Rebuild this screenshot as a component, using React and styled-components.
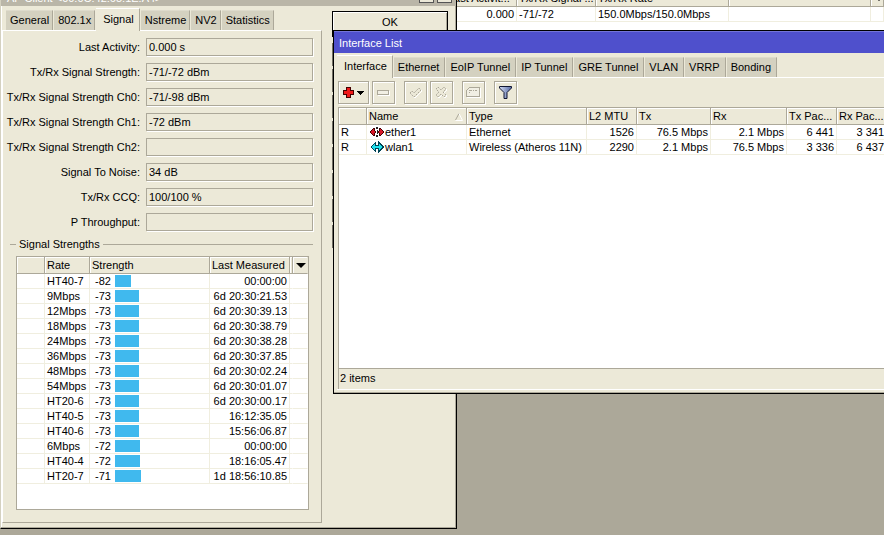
import React, { useState } from 'react';
import styled, { createGlobalStyle, css } from 'styled-components';

const clientTabs = ['General', '802.1x', 'Signal', 'Nstreme', 'NV2', 'Statistics'];

const interfaceTabs = [
  'Interface',
  'Ethernet',
  'EoIP Tunnel',
  'IP Tunnel',
  'GRE Tunnel',
  'VLAN',
  'VRRP',
  'Bonding',
];

const fields = [
  { id: 'activity', label: 'Last Activity:', value: '0.000 s' },
  { id: 'strength', label: 'Tx/Rx Signal Strength:', value: '-71/-72 dBm' },
  { id: 'ch0', label: 'Tx/Rx Signal Strength Ch0:', value: '-71/-98 dBm' },
  { id: 'ch1', label: 'Tx/Rx Signal Strength Ch1:', value: '-72 dBm' },
  { id: 'ch2', label: 'Tx/Rx Signal Strength Ch2:', value: '' },
  { id: 'noise', label: 'Signal To Noise:', value: '34 dB' },
  { id: 'ccq', label: 'Tx/Rx CCQ:', value: '100/100 %' },
  { id: 'throughput', label: 'P Throughput:', value: '' },
];

const rates = [
  { rate: 'HT40-7', dbm: -82, measured: '00:00:00' },
  { rate: '9Mbps', dbm: -73, measured: '6d 20:30:21.53' },
  { rate: '12Mbps', dbm: -73, measured: '6d 20:30:39.13' },
  { rate: '18Mbps', dbm: -73, measured: '6d 20:30:38.79' },
  { rate: '24Mbps', dbm: -73, measured: '6d 20:30:38.28' },
  { rate: '36Mbps', dbm: -73, measured: '6d 20:30:37.85' },
  { rate: '48Mbps', dbm: -73, measured: '6d 20:30:02.24' },
  { rate: '54Mbps', dbm: -73, measured: '6d 20:30:01.07' },
  { rate: 'HT20-6', dbm: -73, measured: '6d 20:30:00.17' },
  { rate: 'HT40-5', dbm: -73, measured: '16:12:35.05' },
  { rate: 'HT40-6', dbm: -73, measured: '15:56:06.87' },
  { rate: '6Mbps', dbm: -72, measured: '00:00:00' },
  { rate: 'HT40-4', dbm: -72, measured: '18:16:05.47' },
  { rate: 'HT20-7', dbm: -71, measured: '1d 18:56:10.85' },
];

const interfaces = [
  { flag: 'R', name: 'ether1', type: 'Ethernet', mtu: '1526', tx: '76.5 Mbps', rx: '2.1 Mbps', txp: '6 441', rxp: '3 341' },
  { flag: 'R', name: 'wlan1', type: 'Wireless (Atheros 11N)', mtu: '2290', tx: '2.1 Mbps', rx: '76.5 Mbps', txp: '3 336', rxp: '6 437' },
];

const barWidth = (dbm) => Math.max(dbm + 97, 16);

function EtherIcon() {
  return (
    <Icon width="14" height="12" viewBox="0 0 14 12">
      <path d="M0 5H1V4H2V3H3V2H5V5H6V7H5V10H3V9H2V8H1V7H0Z" fill="#400" />
      <path d="M14 5H13V4H12V3H11V2H9V5H8V7H9V10H11V9H12V8H13V7H14Z" fill="#400" />
      <path d="M1 5H2V4H3V3H4V5H5V7H4V9H3V8H2V7H1Z" fill="#d81828" />
      <path d="M13 5H12V4H11V3H10V5H9V7H10V9H11V8H12V7H13Z" fill="#d81828" />
      <path d="M6 0H8V12H6Z" fill="#fff" />
      <path d="M6 1H8V3H6ZM7 4H8V8H7ZM6 9H8V11H6Z" fill="#222" />
    </Icon>
  );
}

function WlanIcon() {
  return (
    <Icon width="14" height="12" viewBox="0 0 14 12">
      <path d="M0 6L6 0V4H8V0L14 6L8 12V8H6V12Z" fill="#045" />
      <path d="M1.5 6L5 2.5V5H9V2.5L12.5 6L9 9.5V7H5V9.5Z" fill="#1fe0ee" />
    </Icon>
  );
}

function PlusIcon() {
  return (
    <Icon width="23" height="13" viewBox="0 0 23 13">
      <path d="M4 1H9V4H12V9H9V12H4V9H1V4H4Z" fill="#400" />
      <path d="M5 2H8V5H11V8H8V11H5V8H2V5H5Z" fill="#f01818" />
      <path d="M15 5H22V6H21V7H20V8H19V9H18V8H17V7H16V6H15Z" fill="#000" />
    </Icon>
  );
}

function MinusIcon() {
  return (
    <Icon width="13" height="13" viewBox="0 0 13 13">
      <path d="M1.5 5.5H12.5V9.5H1.5Z" fill="none" stroke="#fff" />
      <path d="M0.5 4.5H11.5V8.5H0.5Z" fill="#f1efe4" stroke="#aca899" />
    </Icon>
  );
}

function CheckIcon() {
  return (
    <Icon width="13" height="13" viewBox="0 0 13 13" $smooth>
      <path d="M2 8L4 6L6 8L11 3L13 5L6 12Z" fill="none" stroke="#fff" />
      <path d="M1 7L3 5L5 7L10 2L12 4L5 11Z" fill="#ece9d8" stroke="#aca899" strokeDasharray="2 1" />
    </Icon>
  );
}

function CrossIcon() {
  return (
    <Icon width="13" height="13" viewBox="0 0 13 13" $smooth>
      <path d="M4 2L7 5L10 2L12 4L9 7L12 10L10 12L7 9L4 12L2 10L5 7L2 4Z" fill="none" stroke="#fff" />
      <path d="M3 1L6 4L9 1L11 3L8 6L11 9L9 11L6 8L3 11L1 9L4 6L1 3Z" fill="#ece9d8" stroke="#aca899" strokeDasharray="2 1" />
    </Icon>
  );
}

function CommentIcon() {
  return (
    <Icon width="15" height="13" viewBox="0 0 15 13">
      <path d="M4.5 2.5H14.5V11.5H1.5V5.5Z" fill="none" stroke="#fff" />
      <path d="M3.5 1.5H13.5V10.5H0.5V4.5L3.5 1.5Z" fill="#f1efe4" stroke="#aca899" />
      <path d="M3 4.5H6M7 4.5H8M9 4.5H11M3 6.5H4" stroke="#aca899" />
    </Icon>
  );
}

function FilterIcon() {
  return (
    <Icon width="13" height="13" viewBox="0 0 13 13" $smooth>
      <defs>
        <linearGradient id="funnel" x1="0" x2="1">
          <stop offset="0" stopColor="#d5def5" />
          <stop offset="1" stopColor="#5468a4" />
        </linearGradient>
      </defs>
      <path d="M0.5 0.5H12.5V2L8 6.5V12.5H5V6.5L0.5 2Z" fill="url(#funnel)" stroke="#111633" />
    </Icon>
  );
}

function TabBar({ items, active, onSelect, wide }) {
  return (
    <Tabs role="tablist" $wide={wide}>
      {items.map((item) => (
        <Tab
          key={item}
          type="button"
          role="tab"
          aria-selected={item === active}
          $active={item === active}
          $wide={wide}
          onClick={() => onSelect(item)}
        >
          {item}
        </Tab>
      ))}
    </Tabs>
  );
}

function RegistrationTable() {
  return (
    <RegistrationWindow>
      <Grid>
        <colgroup>
          <Col $w={71} />
          <Col $w={79} />
          <Col $w={133} />
          <Col $w={142} />
          <Col />
        </colgroup>
        <thead>
          <tr>
            <Th>Last Activit...</Th>
            <Th>Tx/Rx Signal ...</Th>
            <Th>Tx/Rx Rate</Th>
            <Th />
            <Th><Arrow /></Th>
          </tr>
        </thead>
        <tbody>
          <tr>
            <Td $right>0.000</Td>
            <Td>-71/-72</Td>
            <Td>150.0Mbps/150.0Mbps</Td>
            <Td />
            <Td />
          </tr>
        </tbody>
      </Grid>
    </RegistrationWindow>
  );
}

function ClientWindow() {
  const [tab, setTab] = useState('Signal');

  return (
    <ClientFrame>
      <ClientTitle>
        <span>AP Client &lt;00:0C:42:65:1E:A4&gt;</span>
        <TitleButton type="button" aria-label="Minimize" />
        <TitleButton type="button" aria-label="Close" />
      </ClientTitle>
      <ClientBody>
        <ClientMain>
          <TabBar items={clientTabs} active={tab} onSelect={setTab} />
          <Panel>
            {fields.map((f) => (
              <Field key={f.id}>
                <label htmlFor={f.id}>{f.label}</label>
                <FieldInput id={f.id} value={f.value} readOnly />
              </Field>
            ))}
            <GroupTitle>Signal Strengths</GroupTitle>
            <StrengthBox>
              <Grid>
                <colgroup>
                  <Col $w={28} />
                  <Col $w={45} />
                  <Col $w={120} />
                  <Col $w={80} />
                  <Col $w={3} />
                  <Col />
                </colgroup>
                <thead>
                  <tr>
                    <Th />
                    <Th>Rate</Th>
                    <Th>Strength</Th>
                    <Th>Last Measured</Th>
                    <Th />
                    <Th $last><Arrow /></Th>
                  </tr>
                </thead>
                <tbody>
                  {rates.map((r) => (
                    <tr key={r.rate}>
                      <Td />
                      <Td>{r.rate}</Td>
                      <Td>
                        <Strength>
                          <span>{r.dbm}</span>
                          <Bar style={{ width: barWidth(r.dbm) }} />
                        </Strength>
                      </Td>
                      <Td $right>{r.measured}</Td>
                      <Td $last />
                      <Td $last />
                    </tr>
                  ))}
                </tbody>
              </Grid>
            </StrengthBox>
          </Panel>
        </ClientMain>
        <Actions>
          <OkButton type="button">OK</OkButton>
          {[1, 2, 3, 4, 5, 6, 7, 8].map((n) => (
            <ActionSlot key={n} aria-hidden="true" />
          ))}
        </Actions>
      </ClientBody>
    </ClientFrame>
  );
}

function InterfaceWindow() {
  const [tab, setTab] = useState('Interface');

  return (
    <InterfaceFrame>
      <InterfaceTitle>Interface List</InterfaceTitle>
      <TabBar items={interfaceTabs} active={tab} onSelect={setTab} wide />
      <InterfaceBody>
        <Toolbar>
          <ToolButton type="button" aria-label="Add" $wide><PlusIcon /></ToolButton>
          <ToolButton type="button" aria-label="Remove"><MinusIcon /></ToolButton>
          <ToolButton type="button" aria-label="Enable" $group><CheckIcon /></ToolButton>
          <ToolButton type="button" aria-label="Disable"><CrossIcon /></ToolButton>
          <ToolButton type="button" aria-label="Comment" $group><CommentIcon /></ToolButton>
          <ToolButton type="button" aria-label="Filter" $group><FilterIcon /></ToolButton>
        </Toolbar>
        <InterfaceTable>
          <Grid>
            <colgroup>
              <Col $w={28} />
              <Col $w={100} />
              <Col $w={120} />
              <Col $w={50} />
              <Col $w={74} />
              <Col $w={76} />
              <Col $w={50} />
              <Col $w={50} />
              <Col />
            </colgroup>
            <thead>
              <tr>
                <Th />
                <Th>
                  <SortHead>
                    Name
                    <Icon width="8" height="8" viewBox="0 0 8 8" $smooth>
                      <path d="M0.5 7L4 0.5" stroke="#aca899" fill="none" />
                      <path d="M4 0.5L7.5 7.5H0.5" stroke="#fff" fill="none" />
                    </Icon>
                  </SortHead>
                </Th>
                <Th>Type</Th>
                <Th>L2 MTU</Th>
                <Th>Tx</Th>
                <Th>Rx</Th>
                <Th>Tx Pac...</Th>
                <Th>Rx Pac...</Th>
                <Th $last />
              </tr>
            </thead>
            <tbody>
              {interfaces.map((i) => (
                <tr key={i.name}>
                  <Td>{i.flag}</Td>
                  <Td>
                    <NameCell>
                      {i.name === 'wlan1' ? <WlanIcon /> : <EtherIcon />}
                      {i.name}
                    </NameCell>
                  </Td>
                  <Td>{i.type}</Td>
                  <Td $right>{i.mtu}</Td>
                  <Td $right>{i.tx}</Td>
                  <Td $right>{i.rx}</Td>
                  <Td $right>{i.txp}</Td>
                  <Td $right>{i.rxp}</Td>
                  <Td />
                </tr>
              ))}
            </tbody>
          </Grid>
        </InterfaceTable>
        <Status>2 items</Status>
      </InterfaceBody>
    </InterfaceFrame>
  );
}

function App() {
  return (
    <Desktop>
      <GlobalStyle />
      <RegistrationTable />
      <ClientWindow />
      <InterfaceWindow />
    </Desktop>
  );
}

export default App;

const GlobalStyle = createGlobalStyle`
  * {
    box-sizing: border-box;
  }
  body {
    margin: 0;
    font: 11px/15px "Liberation Sans", Arial, sans-serif;
    color: #000;
  }
  button, input {
    font: inherit;
    color: inherit;
    border-radius: 0;
  }
`;

const Desktop = styled.main`
  position: relative;
  height: 100vh;
  overflow: hidden;
  background: #aca899;
`;

const Icon = styled.svg`
  display: block;
  flex: none;
  shape-rendering: ${(p) => (p.$smooth ? 'auto' : 'crispEdges')};
`;

/* windows on the desktop */
const RegistrationWindow = styled.section`
  position: absolute;
  top: -10px;
  left: 446px;
  right: 0;
  height: 380px;
  background: #fff;
`;

const ClientFrame = styled.section`
  position: absolute;
  top: -17px;
  left: 0;
  width: 457px;
  display: flex;
  flex-direction: column;
  background: #ece9d8;
  border: 1px solid #000;
  border-left-color: #d4d1c0;
  box-shadow: inset -1px -1px #aca899, inset 1px 0 #fff;
`;

const InterfaceFrame = styled.section`
  position: absolute;
  top: 30px;
  left: 333px;
  right: -24px;
  height: 364px;
  display: flex;
  flex-direction: column;
  background: #ece9d8;
  border: 1px solid #000;
  box-shadow: inset 0 -1px #aca899;
`;

const ClientTitle = styled.header`
  display: flex;
  align-items: flex-end;
  gap: 3px;
  height: 22px;
  padding: 0 4px 0 6px;
  background: #bab6a8;
  color: #fff;

  span {
    flex: 1;
  }
`;

const TitleButton = styled.button`
  width: 15px;
  height: 15px;
  padding: 0;
  margin-bottom: 3px;
  background: #ece9d8;
  border: 1px solid #555;
`;

const InterfaceTitle = styled.header`
  height: 22px;
  padding: 4px 5px;
  background: #4f50cc;
  border-top: 1px solid #7374d8;
  color: #fff;
`;

const Tabs = styled.div`
  display: flex;
  align-items: flex-end;
  height: 24px;
  padding-left: ${(p) => (p.$wide ? 3 : 4)}px;
  flex: none;
`;

const Tab = styled.button`
  height: 20px;
  padding: 0 ${(p) => (p.$wide ? 5 : 3)}px 0 4px;
  background: #d4d1c0;
  border: 0;
  border-top: 1px solid #dedbcc;
  border-right: 1px solid #aca899;
  margin-right: 1px;
  white-space: nowrap;

  ${(p) => p.$active && css`
    height: 23px;
    padding: 0 5px 2px 7px;
    margin-bottom: -1px;
    background: #ece9d8;
    border-top-color: #fff;
    position: relative;
  `}
`;

const ClientBody = styled.div`
  display: flex;
  gap: 10px;
  padding: 0 8px 5px 1px;
`;

const ClientMain = styled.div`
  flex: 1;
`;

const Panel = styled.div`
  padding: 7px 8px 0 7px;
  height: 493px;
  border: 1px solid #aca899;
  border-top-color: #fff;
  border-left-color: #fff;
`;

const Field = styled.div`
  display: flex;
  align-items: center;
  gap: 6px;
  height: 18px;
  margin-bottom: 7px;

  label {
    width: 130px;
    text-align: right;
    white-space: nowrap;
    display: flex;
    justify-content: flex-end;
  }
`;

const FieldInput = styled.input`
  flex: 1;
  min-width: 0;
  height: 18px;
  padding: 0 2px;
  background: #ece9d8;
  border: 1px solid #aca899;
  box-shadow: 1px 1px #fff;
  outline: 0;
`;

const GroupTitle = styled.h2`
  display: flex;
  align-items: center;
  gap: 3px;
  height: 15px;
  margin: -1px 0 4px;
  font: inherit;

  &::before,
  &::after {
    content: '';
    height: 1px;
    background: #aca899;
  }
  &::before {
    width: 6px;
  }
  &::after {
    flex: 1;
  }
`;

const StrengthBox = styled.div`
  height: 254px;
  margin: 0 4px 0 6px;
  background: #fff;
  border: 1px solid #aca899;
`;

const Grid = styled.table`
  width: 100%;
  table-layout: fixed;
  border-collapse: separate;
  border-spacing: 0;
`;

const Col = styled.col`
  width: ${(p) => (p.$w ? `${p.$w}px` : 'auto')};
`;

const Th = styled.th`
  height: 17px;
  padding: 1px 0 0 2px;
  background: #ece9d8;
  border-right: 1px solid ${(p) => (p.$last ? 'transparent' : '#aca899')};
  border-bottom: 1px solid #aca899;
  box-shadow: inset 1px 1px #fff;
  font-weight: normal;
  text-align: left;
  white-space: nowrap;
  overflow: hidden;
`;

const Td = styled.td`
  height: 15px;
  padding: 0 2px;
  line-height: 14px;
  border-right: 1px solid ${(p) => (p.$last ? 'transparent' : '#f0eedf')};
  border-bottom: 1px solid #f0eedf;
  text-align: ${(p) => (p.$right ? 'right' : 'left')};
  white-space: nowrap;
  overflow: hidden;
`;

const Arrow = styled.span`
  display: block;
  width: 10px;
  margin-left: 1px;
  border: 5px solid transparent;
  border-top-color: #000;
  border-bottom: 0;
`;

const Strength = styled.div`
  display: flex;
  align-items: center;

  span {
    width: 23px;
    padding-left: 3px;
  }
`;

const Bar = styled.i`
  height: 12px;
  background: #40b9ee;
`;

const Actions = styled.div`
  display: flex;
  flex-direction: column;
  gap: 3px;
  width: 116px;
  padding-top: 5px;
`;

const OkButton = styled.button`
  height: 26px;
  padding: 0 0 3px;
  margin-bottom: 3px;
  background: #ece9d8;
  border: 1px solid #000;
  box-shadow: inset 1px 1px #fff, inset -1px 0 #aca899;
`;

const ActionSlot = styled.div`
  height: 23px;
  border: 1px solid #716f64;
`;

const InterfaceBody = styled.div`
  flex: 1;
  display: flex;
  flex-direction: column;
  margin: 0 3px 3px;
  border-top: 1px solid #fff;
  border-bottom: 1px solid #fff;
`;

const Toolbar = styled.div`
  display: flex;
  gap: 3px;
  padding: 3px 1px;
`;

const ToolButton = styled.button`
  display: flex;
  align-items: center;
  justify-content: center;
  width: ${(p) => (p.$wide ? 31 : 23)}px;
  height: 23px;
  padding: 0;
  margin-left: ${(p) => (p.$group ? 6 : 0)}px;
  background: #ece9d8;
  border: 1px solid #aca899;
  box-shadow: inset 1px 1px #fff, 1px 1px #fff;
`;

const InterfaceTable = styled.div`
  flex: 1;
  margin-left: 1px;
  background: #fff;
  border: 1px solid #aca899;
`;

const SortHead = styled.span`
  display: flex;
  align-items: center;
  justify-content: space-between;
  padding-right: 3px;
`;

const NameCell = styled.span`
  display: flex;
  align-items: center;
  gap: 1px;
  padding-left: 1px;
`;

const Status = styled.footer`
  height: 20px;
  margin-left: 1px;
  padding: 2px 1px;
  border-left: 1px solid #aca899;
`;
